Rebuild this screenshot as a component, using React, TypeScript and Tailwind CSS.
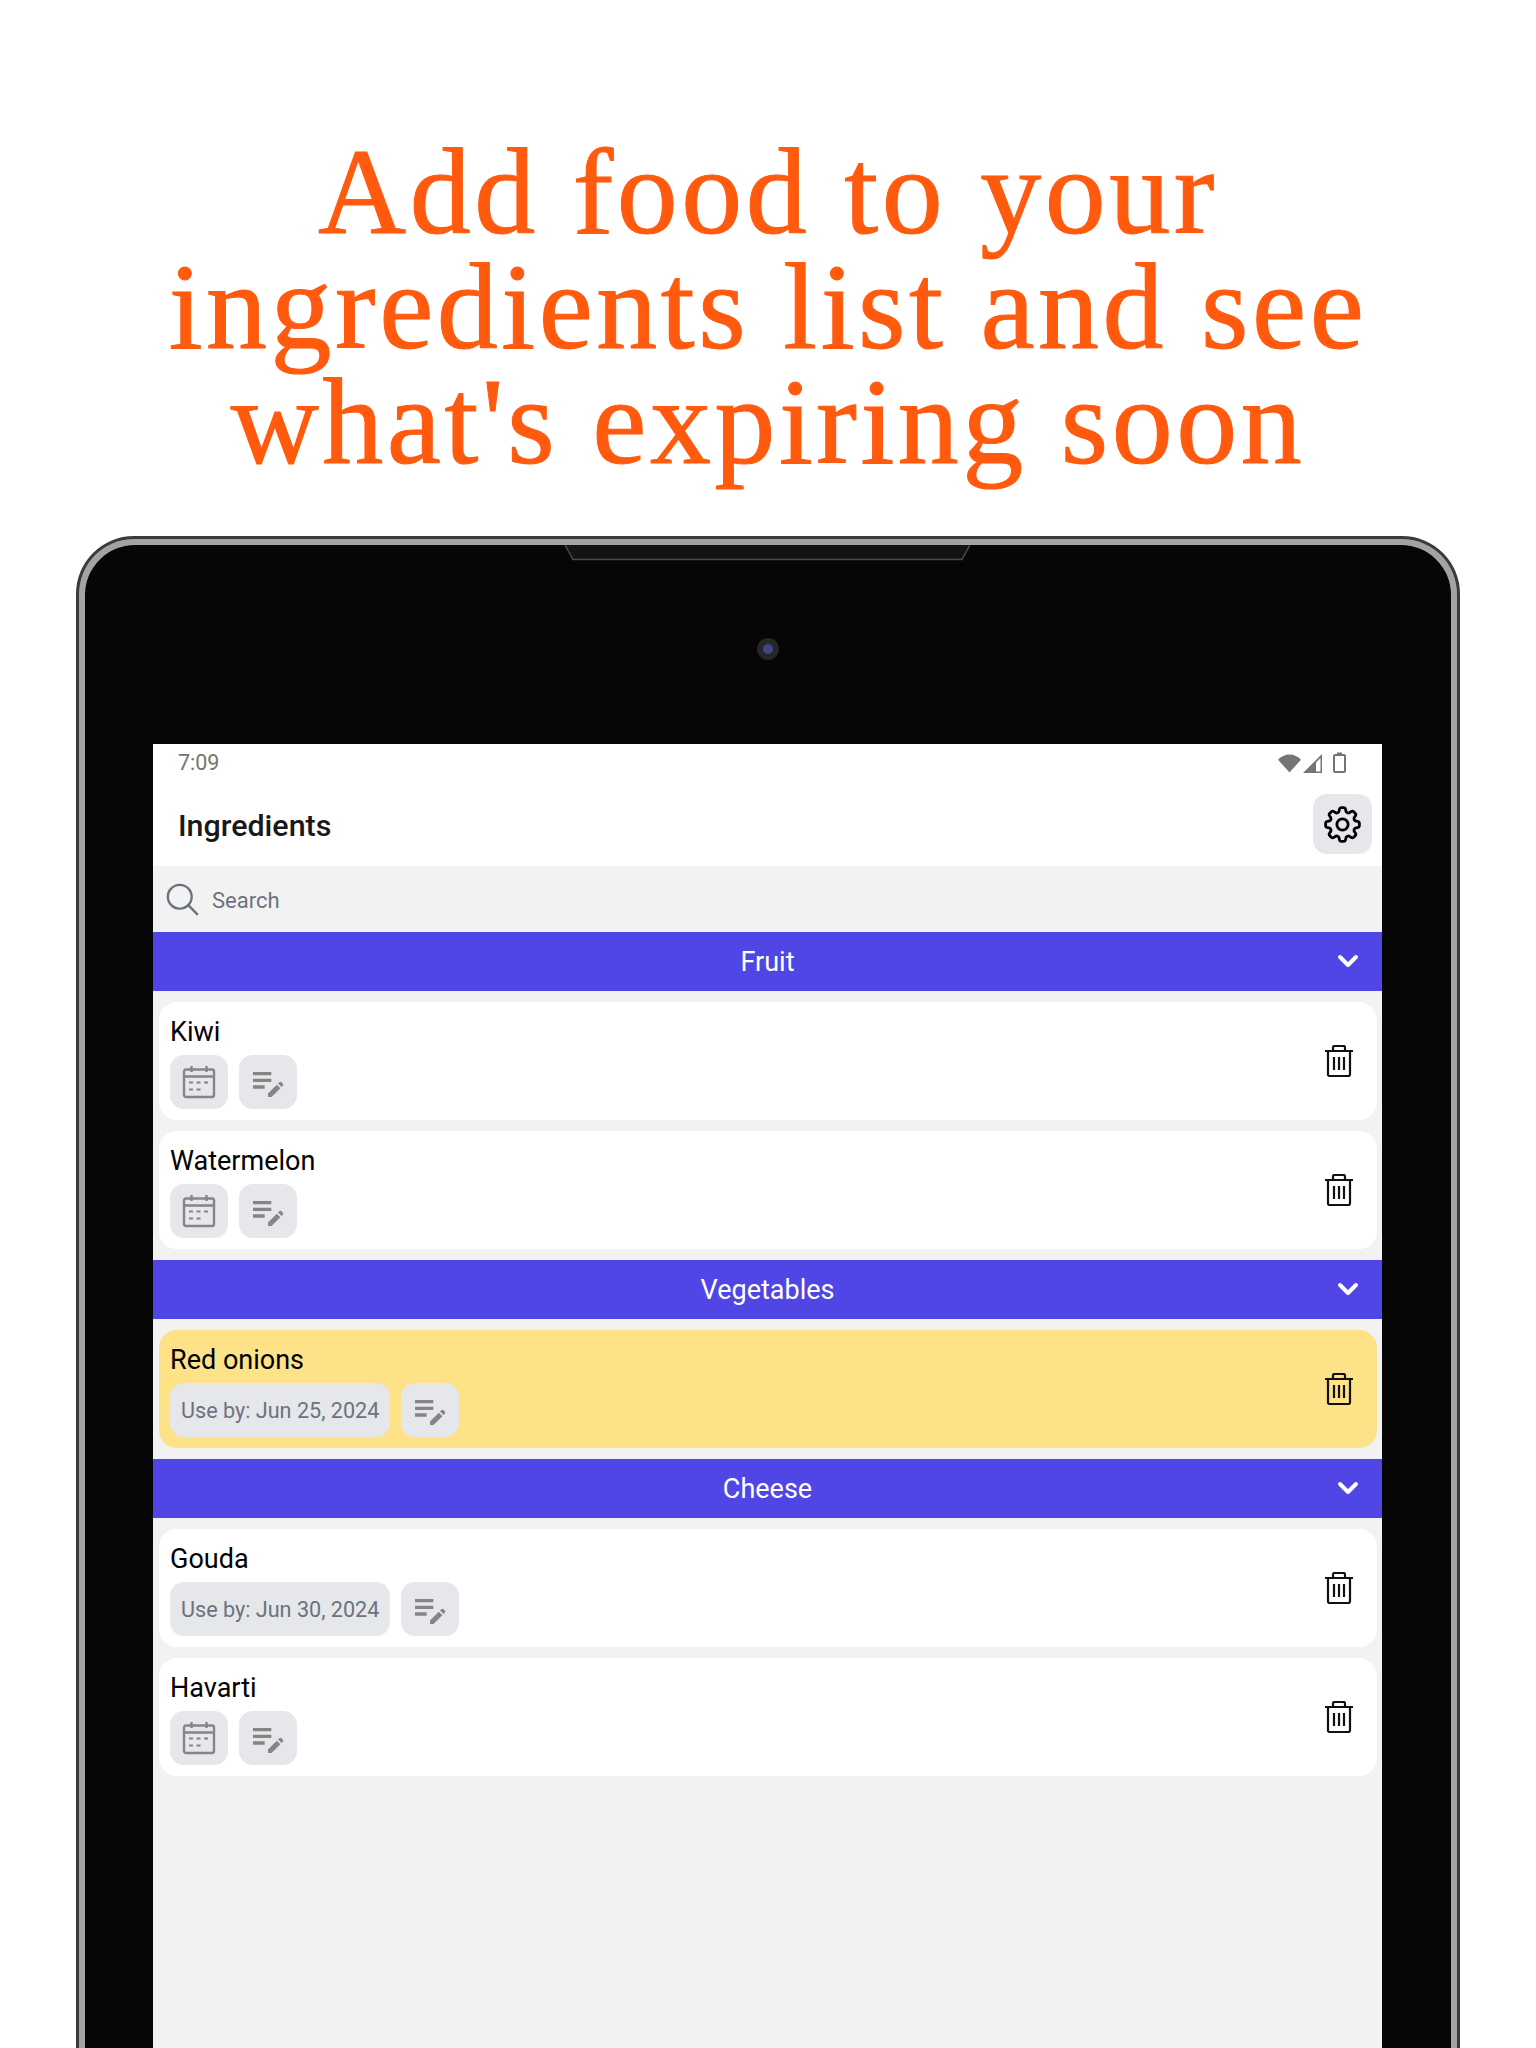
import { ChevronDown } from "lucide-react"
import { HiOutlineCog8Tooth } from "react-icons/hi2"
import { MdEditNote } from "react-icons/md"

type Item = { name: string; useBy?: string; expiring?: boolean }

const groups: { title: string; items: Item[] }[] = [
  { title: "Fruit", items: [{ name: "Kiwi" }, { name: "Watermelon" }] },
  { title: "Vegetables", items: [{ name: "Red onions", useBy: "Jun 25, 2024", expiring: true }] },
  { title: "Cheese", items: [{ name: "Gouda", useBy: "Jun 30, 2024" }, { name: "Havarti" }] },
]

const CalendarIcon = () => (
  <svg width="34" height="34" viewBox="0 0 34 34" fill="none" stroke="#858585" strokeWidth="2.4">
    <rect x="2" y="4.5" width="30" height="27.5" rx="2" />
    <path d="M2 11.5h30M9.5 1v6M24.5 1v6" />
    <path d="M7 17.5h4M14.5 17.5h4M22 17.5h4M7 24.5h4M14.5 24.5h4" strokeWidth="2" />
  </svg>
)

const TrashIcon = () => (
  <svg width="30" height="32" viewBox="0 0 30 32" fill="none" stroke="#111" strokeWidth="2.2" strokeLinejoin="round">
    <path d="M1 6h28M4 6v23.5a1.5 1.5 0 0 0 1.5 1.5h19a1.5 1.5 0 0 0 1.5-1.5V6" />
    <path d="M9 6V2.5A1.5 1.5 0 0 1 10.5 1h9A1.5 1.5 0 0 1 21 2.5V6" />
    <path d="M10 12v13M15 12v13M20 12v13" />
  </svg>
)

const StatusIcons = () => (
  <div className="flex items-center gap-[2px]">
    <svg width="23" height="19" viewBox="0 0 24 19">
      <path d="M0 5.500C3 2 7.500 0 12 0s9 2 12 5.500L12 19z" fill="#757575" />
    </svg>
    <svg width="19" height="19" viewBox="0 0 19 19">
      <path d="M19 0v19H0z" fill="#757575" />
      <path d="M17.500 4v13.500H13V8.500z" fill="#fff" />
    </svg>
    <svg width="13" height="21" viewBox="0 0 13 21" fill="none" stroke="#757575" strokeWidth="2" className="ml-[9px] mb-[2px]">
      <rect x="1" y="3" width="11" height="17" rx="1" />
      <path d="M4 1.500h5" />
    </svg>
  </div>
)

const IngredientRow = ({ item }: { item: Item }) => (
  <div className={`mt-[11px] flex h-[118px] items-center justify-between rounded-[18px] pl-[11px] pr-[23px] ${item.expiring ? "bg-[#fde288]" : "bg-white"}`}>
    <div>
      <div className="h-[36px] text-[27px] leading-[36px] text-black">{item.name}</div>
      <div className="mt-[5px] flex gap-[11px]">
        <div className="flex h-[54px] min-w-[58px] items-center justify-center rounded-[14px] bg-[#e5e7eb]">
          {item.useBy ? (
            <span className="px-[11px] pt-[3px] text-[21.6px] text-[#6b7280]">Use by: {item.useBy}</span>
          ) : (
            <CalendarIcon />
          )}
        </div>
        <div className="flex h-[54px] w-[58px] items-center justify-center rounded-[14px] bg-[#e5e7eb]">
          <MdEditNote size={40} color="#858585" />
        </div>
      </div>
    </div>
    <TrashIcon />
  </div>
)

export default function App() {
  return (
    <div className="h-[2048px] w-[1536px] overflow-hidden bg-white">
      <h1 className="pt-[134px] text-center font-['Liberation_Serif',serif] text-[122px] leading-[115px] tracking-[3.5px] text-[#ff5a0e] [-webkit-text-stroke:1px_#ff5a0e]">
        Add food to your
        <br />
        ingredients list and see
        <br />
        what's expiring soon
      </h1>

      <div className="mx-[76px] mt-[57px] h-[1600px] rounded-t-[58px] border-x-[3px] border-t-[3px] border-b-0 border-[#3a3a3a] bg-[#a3a3a3] px-[6px] pt-[6px]">
        <div className="relative h-full rounded-t-[50px] bg-[#060606] pl-[68px] pr-[69px] pt-[199px]">
          <svg className="absolute left-[480px] top-0" width="405" height="16" viewBox="0 0 405 16" fill="#141414" stroke="#4a4a4a" strokeWidth="1.5">
            <path d="M0 0L8 14.500h389L405 0" />
          </svg>
          <div className="absolute left-[672px] top-[93px] flex h-[22px] w-[22px] items-center justify-center rounded-full bg-[#262626]">
            <div className="h-[10px] w-[10px] rounded-full bg-[#3f4688]" />
          </div>

          <div className="h-full bg-[#f2f2f2] font-['Roboto',sans-serif]">
            <div className="h-[122px] bg-white">
              <div className="flex h-[38px] items-center justify-between pl-[25px] pr-[36px]">
                <span className="text-[21.5px] text-[#757575]">7:09</span>
                <StatusIcons />
              </div>
              <div className="mt-[12px] flex items-center justify-between pl-[25px] pr-[10px]">
                <span className="pt-[3px] text-[30.4px] font-medium text-[#18181b]">Ingredients</span>
                <div className="flex h-[60px] w-[59px] items-center justify-center rounded-[14px] bg-[#e5e7eb]">
                  <HiOutlineCog8Tooth size={45} color="#000" />
                </div>
              </div>
            </div>

            <div className="flex h-[66px] items-center pl-[13px]">
              <svg width="33" height="33" viewBox="0 0 36 36" fill="none" stroke="#6b7280" strokeWidth="2.6" strokeLinecap="round">
                <circle cx="15" cy="15" r="13" />
                <path d="M24.500 24.500L34 34" />
              </svg>
              <span className="ml-[13px] pt-[3px] text-[22px] text-[#6b7280]">Search</span>
            </div>

            {groups.map((group) => (
              <div key={group.title} className="pb-[11px]">
                <div className="relative flex h-[59px] items-center justify-center bg-[#4f46e5] pt-[2px] text-[27px] text-white">
                  {group.title}
                  <ChevronDown className="absolute right-[18px] top-[13px]" size={32} strokeWidth={3} />
                </div>
                <div className="pl-[6px] pr-[5px]">
                  {group.items.map((item) => (
                    <IngredientRow key={item.name} item={item} />
                  ))}
                </div>
              </div>
            ))}
          </div>
        </div>
      </div>
    </div>
  )
}
